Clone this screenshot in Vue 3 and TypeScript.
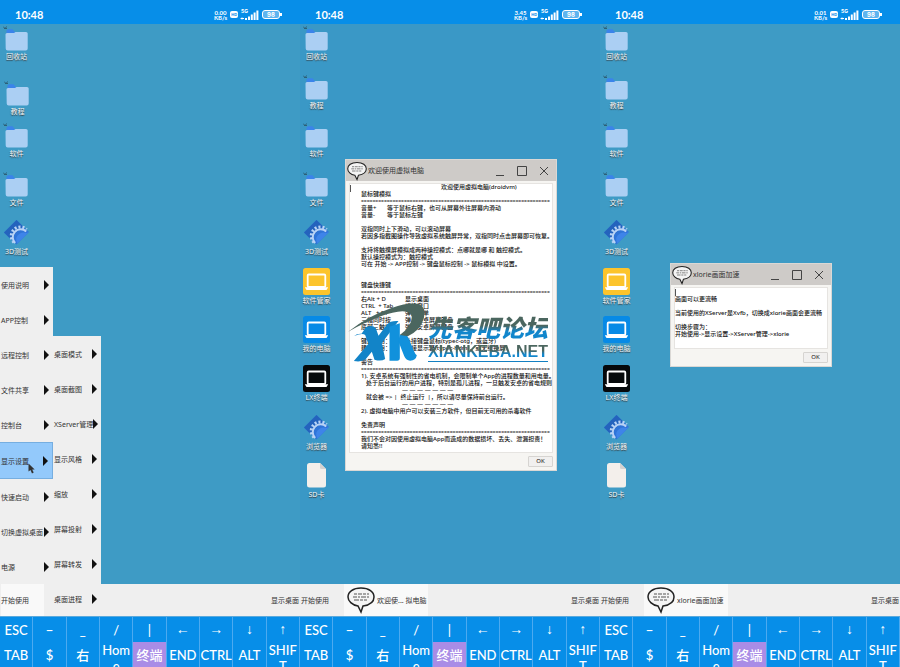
<script setup lang="ts">
type IconKind = 'folder' | 'gear' | 'tile' | 'sd'

interface DesktopIcon {
  label: string
  kind: IconKind
  tone?: string
  shifted?: boolean
}

interface TextLine {
  text?: string
  key?: string
  kind?: 'title' | 'rule' | 'deep' | 'short' | 'wide' | 'dash'
}

interface Phone {
  id: string
  rate: string
  icons: DesktopIcon[]
  task?: string
}

const allIcons: DesktopIcon[] = [
  { label: '回收站', kind: 'folder' },
  { label: '教程', kind: 'folder' },
  { label: '软件', kind: 'folder' },
  { label: '文件', kind: 'folder' },
  { label: '3D测试', kind: 'gear' },
  { label: '软件管家', kind: 'tile', tone: 'yellow' },
  { label: '我的电脑', kind: 'tile', tone: 'blue' },
  { label: 'LX终端', kind: 'tile', tone: 'black' },
  { label: '浏览器', kind: 'gear' },
  { label: 'SD卡', kind: 'sd' },
]

const phones: Phone[] = [
  {
    id: 'start-open',
    rate: '0.00',
    icons: allIcons.slice(0, 5).map((icon, i) => ({ ...icon, shifted: i === 1 })),
  },
  { id: 'welcome', rate: '3.45', icons: allIcons, task: '欢迎使... 拟电脑' },
  { id: 'xlorie', rate: '0.01', icons: allIcons, task: 'xlorie画面加速' },
]

const mainMenu = ['使用说明', 'APP控制', '远程控制', '文件共享', '控制台', '显示设置', '快速启动', '切换虚拟桌面', '电源']
const subMenu = ['桌面模式', '桌面截图', 'XServer管理', '显示风格', '缩放', '屏幕投射', '屏幕转发', '桌面进程']
const activeItem = '显示设置'

const upperKeys = ['ESC', '−', '_', '/', '|', '←', '→', '↓', '↑']
const lowerKeys = ['TAB', '$', '右', 'Home', '终端', 'END', 'CTRL', 'ALT', 'SHIFT']
const arrowKeys = ['←', '→', '↓', '↑']

const ruleText = '='.repeat(66)

const welcomeLines: TextLine[] = [
  { text: '欢迎使用虚拟电脑(droidvm)', kind: 'title' },
  { text: '鼠标键模拟' },
  { kind: 'rule' },
  { key: '音量+', text: '等于鼠标右键，也可从屏幕外往屏幕内滑动', kind: 'short' },
  { key: '音量-', text: '等于鼠标左键', kind: 'short' },
  {},
  { text: '双指同时上下滑动，可以滚动屏幕' },
  { text: '若因多指截图操作导致虚拟系统触屏异常，双指同时点击屏幕即可恢复。' },
  {},
  { text: '支持将触摸屏模拟成两种操控模式：点哪就是哪 和 触控模式。' },
  { text: '默认操控模式为：触控模式' },
  { text: '可在 开始 -> APP控制 -> 键盘鼠标控制 -> 鼠标模拟 中设置。' },
  {},
  {},
  { text: '键盘快捷键' },
  { kind: 'rule' },
  { key: '右Alt + D', text: '显示桌面', kind: 'wide' },
  { key: 'CTRL  + Tab', text: '切换窗口', kind: 'wide' },
  { key: 'ALT   + F1', text: '弹出菜单', kind: 'wide' },
  { key: '三指同时按', text: '弹出安卓屏幕键盘', kind: 'wide' },
  { key: '底部三触控', text: '弹出安卓屏幕键盘', kind: 'wide' },
  {},
  { key: '键盘使用：', text: '外接键盘鼠标(typec-otg，或蓝牙)', kind: 'wide' },
  { key: '建议使用：', text: '外接显示器(typec-hdmi，或无线投屏)', kind: 'wide' },
  {},
  { text: '警告' },
  { kind: 'rule' },
  { text: '1). 安卓系统有强制性的省电机制，会限制单个App的进程数量和用电量。' },
  { text: '处于后台运行的用户进程，特别是孤儿进程，一旦触发安卓的省电规则', kind: 'deep' },
  { text: '— — — — — — —', kind: 'dash' },
  { text: '就会被 => |  终止运行  |，所以请尽量保持前台运行。', kind: 'deep' },
  { text: '— — — — — — —', kind: 'dash' },
  { text: '2). 虚拟电脑中用户可以安装三方软件，但目前无可用的杀毒软件' },
  {},
  { text: '免责声明' },
  { kind: 'rule' },
  { text: '我们不会对因使用虚拟电脑App而造成的数据损坏、丢失、泄漏担责！' },
  { text: '请知悉!!' },
]

const xlorieLines: string[] = [
  '',
  '画面可以更流畅',
  '',
  '当前使用的XServer是Xvfb，切换成xlorie画面会更流畅',
  '',
  '切换步骤为：',
  '开始使用->显示设置->XServer管理->xlorie',
]
</script>

<template>
  <main class="page">
    <section v-for="phone in phones" :key="phone.id" class="phone" :class="phone.id">
      <header class="status">
        <time class="clock">10:48</time>
        <div class="rate"><span>{{ phone.rate }}</span><span>KB/s</span></div>
        <span class="hd">HD</span>
        <span class="gen">5G</span>
        <svg class="signal" viewBox="0 0 19 12" aria-hidden="true">
          <path d="M1 9.500h3M2 8.500l-1 1 1 1" class="wire" />
          <path d="M5 9h2v2H5zM8 7.500h2V11H8zM10.800 5.500h2V11h-2zM13.600 3.500h2V11h-2zM16.400 1.500h2V11h-2z" class="bars" />
        </svg>
        <span class="battery">98</span>
      </header>

      <div class="screen">
        <div class="desktop">
          <ul class="icons">
            <li v-for="icon in phone.icons" :key="icon.label">
              <a href="#" class="icon" :class="{ shifted: icon.shifted }">
                <svg viewBox="0 0 27 27" aria-hidden="true">
                  <template v-if="icon.kind === 'folder'">
                    <path d="M0 2.500l2 2M3.500 2.500L2 5M1 4.500h3" class="mark" />
                    <path d="M3.500 10V7q0-1.700 2-1.700h4l2.500 3h10V12h-18.500z" fill="#3b84ea" />
                    <path d="M2.500 10.500q0-1.500 1.500-1.500h7l1.500-1H23q1.700 0 1.700 1.500V24.500q0 2-2 2h-18q-2 0-2-2z" fill="#abcff3" />
                  </template>
                  <template v-else-if="icon.kind === 'gear'">
                    <path d="M13.500 1L26 13 13.500 25.500 1 13.500z" fill="#2f74d8" />
                    <path d="M13.500 1L20 7.500 9 17.500 6.500 19 1 13.500z" fill="#2463bd" />
                    <path d="M11 23.500a8 8 0 0 1 12.500-13" class="teeth" />
                    <path d="M12.200 24a7 7 0 0 1 11-11.500" class="ring" />
                    <path d="M26 13L14.500 24.500q-3.500-6 2-9.700 3.500-2.300 6.500-.800z" fill="#3e84e9" />
                  </template>
                  <template v-else-if="icon.kind === 'tile'">
                    <rect width="27" height="27" rx="2.500" :class="icon.tone" />
                    <rect x="4.700" y="6.500" width="17.600" height="12.500" rx="1" class="laptop" />
                    <path d="M1.800 19.200h23.400l-1.700 2.800H3.500z" fill="#fff" />
                  </template>
                  <template v-else>
                    <path d="M4 3.500Q4 1 6.500 1H17l6 6v16q0 2.500-2.500 2.500h-14Q4 25.500 4 23z" fill="#f3efeb" />
                    <path d="M17 1v4.500q0 1.500 1.500 1.500H23z" fill="#d5d3d1" />
                  </template>
                </svg>
                <span>{{ icon.label }}</span>
              </a>
            </li>
          </ul>

          <section v-if="phone.id === 'welcome'" class="dialog dialog-welcome">
            <header class="titlebar">
              <svg class="bubble" viewBox="0 0 30 28" aria-hidden="true">
                <path d="M15 2C7 2 2 6 2 11c0 4 4 8 10 9l3 6 2-6c7-1 11-4 11-9 0-5-5-9-13-9z" />
                <path d="M8 8h3m1 0h4m1 0h3m1 0h2M7 11h4m1 0h2m1 0h5m1 0h2M8 14h5m1 0h3m1 0h3" class="scribble" />
              </svg>
              <h2>欢迎使用虚拟电脑</h2>
              <button aria-label="最小化" class="win"><svg viewBox="0 0 10 10"><path d="M1 9.500h8" /></svg></button>
              <button aria-label="最大化" class="win"><svg viewBox="0 0 10 10"><path d="M.500.500h9v9h-9z" /></svg></button>
              <button aria-label="关闭" class="win"><svg viewBox="0 0 10 10"><path d="M1 1l8 8M9 1L1 9" /></svg></button>
            </header>
            <div class="text-view manual">
              <p v-for="(line, i) in welcomeLines" :key="i" :class="line.kind">
                <template v-if="line.kind === 'rule'">{{ ruleText }}</template>
                <template v-else><span v-if="line.key" class="key-name">{{ line.key }}</span>{{ line.text }}</template>
              </p>
            </div>
            <footer><button class="ok">OK</button></footer>
          </section>

          <section v-if="phone.id === 'xlorie'" class="dialog dialog-xlorie">
            <header class="titlebar">
              <svg class="bubble" viewBox="0 0 30 28" aria-hidden="true">
                <path d="M15 2C7 2 2 6 2 11c0 4 4 8 10 9l3 6 2-6c7-1 11-4 11-9 0-5-5-9-13-9z" />
                <path d="M8 8h3m1 0h4m1 0h3m1 0h2M7 11h4m1 0h2m1 0h5m1 0h2M8 14h5m1 0h3m1 0h3" class="scribble" />
              </svg>
              <h2>xlorie画面加速</h2>
              <button aria-label="最小化" class="win"><svg viewBox="0 0 10 10"><path d="M1 9.500h8" /></svg></button>
              <button aria-label="最大化" class="win"><svg viewBox="0 0 10 10"><path d="M.500.500h9v9h-9z" /></svg></button>
              <button aria-label="关闭" class="win"><svg viewBox="0 0 10 10"><path d="M1 1l8 8M9 1L1 9" /></svg></button>
            </header>
            <div class="text-view note">
              <p v-for="(line, i) in xlorieLines" :key="i">{{ line }}</p>
            </div>
            <footer><button class="ok">OK</button></footer>
          </section>

          <div v-if="phone.id === 'welcome'" class="watermark">
            <svg viewBox="0 0 260 204" aria-hidden="true">
              <path d="M30 120q8-8 22-7l14-20q20-8 29 4l8 22 26-34q10-12 34-10l-50 66 10 48q-12 8-32 2l-8-24-18 22q-12 10-36 6l44-52-10-26q-8-8-33 3z" fill="#1284c8" />
              <path d="M136 92l31-10v104q0 8-8 8h-23z" fill="#1191dc" />
              <path d="M168 116q20-3 26 12l15 36q5 12 9 14-3 16-20 16-12 0-18-14l-18-46z" fill="#1191dc" />
              <path d="M12 107Q70 61 142 36 198 17 224 25q24 9 15 42-9 35-48 54l-24-4q34-25 36-51 1-20-28-20Q122 47 12 107z" fill="#4b665f" />
            </svg>
            <div class="watermark-text">
              <strong>先客吧论坛</strong>
              <b>XIANKEBA.NET</b>
            </div>
          </div>
        </div>

        <nav class="taskbar">
          <button class="start">开始使用</button>
          <button v-if="phone.task" class="task">
            <svg class="bubble" viewBox="0 0 30 28" aria-hidden="true">
              <path d="M15 2C7 2 2 6 2 11c0 4 4 8 10 9l3 6 2-6c7-1 11-4 11-9 0-5-5-9-13-9z" />
              <path d="M8 8h3m1 0h4m1 0h3m1 0h2M7 11h4m1 0h2m1 0h5m1 0h2M8 14h5m1 0h3m1 0h3" class="scribble" />
            </svg>
            <span>{{ phone.task }}</span>
          </button>
          <button class="show-desktop">显示桌面</button>
        </nav>

        <div v-if="phone.id === 'start-open'" class="menus">
          <nav class="menu main-menu">
            <button v-for="item in mainMenu" :key="item" :class="{ active: item === activeItem }">
              {{ item }}
              <svg v-if="item === activeItem" class="cursor" viewBox="0 0 7 11" aria-hidden="true">
                <path d="M.500.500v8l2-1.500L4 10.500 5.700 9.600 4.200 6.500h2.500z" />
              </svg>
            </button>
          </nav>
          <nav class="menu sub-menu">
            <button v-for="item in subMenu" :key="item">{{ item }}</button>
          </nav>
        </div>
      </div>

      <div class="keys">
        <button v-for="k in upperKeys" :key="k" :class="{ arrow: arrowKeys.includes(k) }">{{ k }}</button>
        <button v-for="k in lowerKeys" :key="k" :class="{ held: k === '终端' }">{{ k }}</button>
      </div>
    </section>
  </main>
</template>

<style>
body {
  margin: 0;
  background: #3e9bc5;
}
</style>

<style scoped>
* {
  box-sizing: border-box;
}

.page {
  display: grid;
  grid-template-columns: repeat(3, 1fr);
  height: 100vh;
  overflow: hidden;
  font-family: "Noto Sans", "Noto Sans CJK SC", sans-serif;
  font-size: 7px;
  color: #333;
}

button {
  margin: 0;
  padding: 0;
  border: 0;
  background: none;
  font: inherit;
  color: inherit;
}

p,
h2,
ul {
  margin: 0;
  padding: 0;
}

.phone {
  display: flex;
  flex-direction: column;
  min-width: 0;
  min-height: 0;
  background: #3e9bc5;
}

.phone.welcome {
  background: #3a98c6;
}

.status {
  display: flex;
  align-items: center;
  gap: 3px;
  height: 24px;
  padding: 5px 20px 0 15px;
  background: #078ee8;
  color: #fff;
}

.clock {
  flex: 1;
  font: 700 11px/12px Lato, sans-serif;
}

.rate {
  display: flex;
  flex-direction: column;
  font: 700 6px/5px Lato, sans-serif;
  text-align: center;
}

.hd {
  padding: 0 1px;
  border-radius: 2px;
  background: #fff;
  color: #078ee8;
  font: 700 4px/7px Inter, sans-serif;
}

.gen {
  align-self: flex-start;
  padding-top: 4px;
  font: 700 5px/5px Inter, sans-serif;
}

.signal {
  width: 19px;
  height: 12px;
  margin-left: -11px;
}

.wire {
  fill: none;
  stroke: #fff;
}

.bars {
  fill: #fff;
}

.battery {
  position: relative;
  width: 18px;
  border: 1px solid #fff;
  border-radius: 3px;
  background: #5db4ef;
  font: 700 6px/7px Inter, sans-serif;
  text-align: center;
}

.battery::after {
  content: "";
  position: absolute;
  top: 2px;
  right: -3px;
  width: 2px;
  height: 3px;
  background: #fff;
}

.screen {
  position: relative;
  display: flex;
  flex: 1;
  flex-direction: column;
  min-height: 0;
}

.desktop {
  position: relative;
  flex: 1;
  min-height: 0;
}

.icons {
  display: grid;
  grid-template-rows: repeat(10, 1fr);
  justify-items: start;
  height: 87%;
  list-style: none;
}

.icon {
  display: flex;
  flex-direction: column;
  align-items: center;
  gap: 1px;
  width: 33px;
  color: #f4f4f4;
  font-size: 7px;
  line-height: 10px;
  text-decoration: none;
  text-shadow: 0 1px 1px #333;
  white-space: nowrap;
}

.icon svg {
  width: 27px;
  height: 27px;
}

.icon.shifted {
  position: relative;
  top: 6px;
  left: 1px;
}

.mark {
  fill: none;
  stroke: #2d6078;
}

.teeth {
  fill: none;
  stroke: #b9d3f5;
  stroke-width: 3;
  stroke-dasharray: 2 1.900;
}

.ring {
  fill: none;
  stroke: #b9d3f5;
  stroke-width: 2;
}

.laptop {
  fill: none;
  stroke: #fff;
  stroke-width: 1.800;
}

.yellow {
  fill: #fcc42c;
}

.blue {
  fill: #078ae6;
}

.black {
  fill: #06090b;
}

.bubble {
  flex: none;
  fill: #f4f4f4;
  stroke: #222;
  stroke-width: 1.500;
}

.scribble {
  fill: none;
  stroke: #555;
  stroke-width: 1;
}

.dialog {
  position: absolute;
  display: flex;
  flex-direction: column;
  border: 1px solid #dad8d5;
  background: #f6f5f2;
}

.dialog-welcome {
  top: 135px;
  left: 45px;
  width: 212px;
}

.dialog-xlorie {
  top: 239px;
  left: 70px;
  width: 162px;
}

.titlebar {
  display: flex;
  align-items: center;
  gap: 12px;
  height: 21px;
  padding-right: 7px;
  background: #cecbc8;
}

.titlebar .bubble {
  width: 22px;
  height: 20px;
}

.titlebar h2 {
  flex: 1;
  margin-left: -12px;
  color: #333;
  font-size: 7px;
  font-weight: 400;
  line-height: 10px;
}

.win {
  display: flex;
}

.win svg {
  width: 10px;
  height: 10px;
  fill: none;
  stroke: #444;
}

.text-view {
  position: relative;
  margin: 2px 3px 0;
  border: 1px solid #e6e4e1;
  background: #fff;
  color: #111;
  font-size: 6px;
  font-weight: 500;
  line-height: 7px;
  white-space: pre;
  overflow: hidden;
}

.text-view::before {
  content: "";
  position: absolute;
  top: 1px;
  left: 0;
  width: 1px;
  height: 7px;
  background: #555;
}

.text-view p {
  height: 7px;
}

.manual {
  padding: 0 0 2px 11px;
}

.note {
  padding: 1px 0 10px;
}

.title {
  padding-left: 80px;
}

.rule {
  font-size: 5px;
}

.deep {
  padding-left: 5px;
}

.dash {
  padding-left: 41px;
}

.key-name {
  display: inline-block;
}

.short .key-name {
  width: 26px;
}

.wide .key-name {
  width: 44px;
}

.dialog footer {
  display: flex;
  justify-content: flex-end;
  padding: 3px;
}

.ok {
  width: 25px;
  height: 11px;
  border: 1px solid #d6d4d1;
  border-radius: 1px;
  background: #f1f0ef;
  color: #111;
  font-size: 6px;
  line-height: 9px;
}

.watermark {
  position: absolute;
  top: 272px;
  left: 44px;
  display: flex;
  align-items: flex-start;
  pointer-events: none;
}

.watermark svg {
  width: 87px;
  height: 68px;
}

.watermark-text {
  display: flex;
  flex-direction: column;
  margin: 16px 0 0 -3px;
  border-bottom: 1px solid #1480c2;
  white-space: nowrap;
}

.watermark strong,
.watermark b {
  background: linear-gradient(#4b665f 45%, #1186cc 65%);
  background-clip: text;
  color: transparent;
}

.watermark strong {
  font: italic 900 24px/30px "Noto Sans CJK SC", sans-serif;
}

.watermark b {
  font: 700 16px/19px "Liberation Sans", sans-serif;
}

.taskbar {
  display: flex;
  align-items: stretch;
  height: 32px;
  padding: 0 1px;
  background: #efefef;
}

.start {
  width: 43px;
  background: #f9f9f9;
  text-align: left;
}

.welcome .start,
.xlorie .start {
  background: none;
}

.task {
  display: flex;
  align-items: center;
  gap: 1px;
  min-width: 84px;
  padding-left: 2px;
  background: #f9f9f9;
}

.task .bubble {
  width: 30px;
  height: 28px;
}

.show-desktop {
  margin-left: auto;
}

.menus {
  position: absolute;
  bottom: 0;
  left: 0;
  display: flex;
  align-items: flex-end;
}

.menu {
  display: flex;
  flex-direction: column;
  background: #efefef;
}

.main-menu {
  width: 53px;
  margin-bottom: 32px;
}

.sub-menu {
  width: 48px;
}

.menu button {
  position: relative;
  display: flex;
  align-items: center;
  justify-content: space-between;
  height: 35px;
  padding: 0 4px 0 1px;
  white-space: nowrap;
}

.menu button::after {
  content: "";
  order: 2;
  border: 5px solid transparent;
  border-right: 0;
  border-left-color: #111;
}

.menu .active {
  height: 37px;
  border: 1px solid #76aee0;
  border-left: 0;
  background: #93c9fb;
}

.menu .cursor {
  position: absolute;
  top: 20px;
  left: 28px;
  width: 7px;
  height: 11px;
  fill: #333;
}

.keys {
  display: grid;
  grid-template-columns: repeat(9, minmax(0, 1fr));
  grid-auto-rows: 25px;
  border-top: 1px solid #5aa9dc;
  background: #078ee8;
  color: #fff;
  font: 500 13px/16px Lato, "Noto Sans CJK SC", sans-serif;
}

.keys button {
  display: block;
  align-content: safe center;
  height: 25px;
  overflow: hidden;
  border-right: 1px solid #4caaf0;
  text-align: center;
  word-break: break-all;
}

.keys .arrow {
  font-family: "Liberation Serif", serif;
  font-size: 14px;
}

.keys .held {
  background: #a98ce6;
}
</style>
